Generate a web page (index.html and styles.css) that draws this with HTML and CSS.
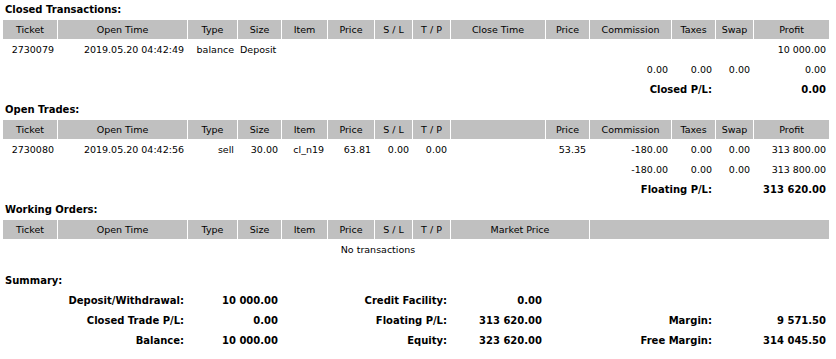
FILE: index.html
```html
<!DOCTYPE html>
<html>
<head>
<meta charset="utf-8">
<title>Statement</title>
<link rel="stylesheet" href="styles.css">
</head>
<body>
<table class="report">
  <colgroup>
    <col class="c-ticket"><col class="c-otime"><col class="c-type"><col class="c-size"><col class="c-item"><col class="c-price"><col class="c-sl"><col class="c-tp"><col class="c-ctime"><col class="c-price2"><col class="c-comm"><col class="c-tax"><col class="c-swap"><col class="c-profit">
  </colgroup>
  <tbody>
    <tr class="title"><td colspan="14">Closed Transactions:</td></tr>
    <tr class="head">
      <td>Ticket</td><td>Open Time</td><td>Type</td><td>Size</td><td>Item</td><td>Price</td><td>S / L</td><td>T / P</td><td>Close Time</td><td>Price</td><td>Commission</td><td>Taxes</td><td>Swap</td><td>Profit</td>
    </tr>
    <tr class="data">
      <td>2730079</td><td>2019.05.20 04:42:49</td><td>balance</td><td class="left">Deposit</td><td></td><td></td><td></td><td></td><td></td><td></td><td></td><td></td><td></td><td>10 000.00</td>
    </tr>
    <tr class="data">
      <td colspan="10"></td><td>0.00</td><td>0.00</td><td>0.00</td><td>0.00</td>
    </tr>
    <tr class="data total">
      <td colspan="10"></td><td colspan="2">Closed P/L:</td><td colspan="2">0.00</td>
    </tr>

    <tr class="title"><td colspan="14">Open Trades:</td></tr>
    <tr class="head">
      <td>Ticket</td><td>Open Time</td><td>Type</td><td>Size</td><td>Item</td><td>Price</td><td>S / L</td><td>T / P</td><td></td><td>Price</td><td>Commission</td><td>Taxes</td><td>Swap</td><td>Profit</td>
    </tr>
    <tr class="data">
      <td>2730080</td><td>2019.05.20 04:42:56</td><td>sell</td><td>30.00</td><td>cl_n19</td><td>63.81</td><td>0.00</td><td>0.00</td><td></td><td>53.35</td><td>-180.00</td><td>0.00</td><td>0.00</td><td>313 800.00</td>
    </tr>
    <tr class="data">
      <td colspan="10"></td><td>-180.00</td><td>0.00</td><td>0.00</td><td>313 800.00</td>
    </tr>
    <tr class="data total">
      <td colspan="10"></td><td colspan="2">Floating P/L:</td><td colspan="2">313 620.00</td>
    </tr>

    <tr class="title"><td colspan="14">Working Orders:</td></tr>
    <tr class="head">
      <td>Ticket</td><td>Open Time</td><td>Type</td><td>Size</td><td>Item</td><td>Price</td><td>S / L</td><td>T / P</td><td colspan="2">Market Price</td><td colspan="4"></td>
    </tr>
    <tr class="data">
      <td colspan="13" class="center">No transactions</td><td></td>
    </tr>
    <tr class="spacer"><td colspan="14"></td></tr>

    <tr class="title"><td colspan="14">Summary:</td></tr>
    <tr class="data total">
      <td colspan="2">Deposit/Withdrawal:</td><td colspan="2">10 000.00</td><td colspan="4">Credit Facility:</td><td>0.00</td><td colspan="3"></td><td colspan="2"></td>
    </tr>
    <tr class="data total">
      <td colspan="2">Closed Trade P/L:</td><td colspan="2">0.00</td><td colspan="4">Floating P/L:</td><td>313 620.00</td><td colspan="3">Margin:</td><td colspan="2">9 571.50</td>
    </tr>
    <tr class="data total">
      <td colspan="2">Balance:</td><td colspan="2">10 000.00</td><td colspan="4">Equity:</td><td>323 620.00</td><td colspan="3">Free Margin:</td><td colspan="2">314 045.50</td>
    </tr>
  </tbody>
</table>
</body>
</html>
```

FILE: styles.css
```css
html, body {
  margin: 0;
  padding: 0;
  background: #ffffff;
}

.report {
  margin: -1px 0 0 2px;
  width: 828px;
  table-layout: fixed;
  border-collapse: separate;
  border-spacing: 1px;
  font-family: "DejaVu Sans", Verdana, sans-serif;
  font-size: 9.5px;
  line-height: 13px;
  color: #000000;
}

.c-ticket { width: 54px; }
.c-otime { width: 129px; }
.c-type { width: 49px; }
.c-size { width: 43px; }
.c-item { width: 45px; }
.c-price { width: 46px; }
.c-sl { width: 37px; }
.c-tp { width: 37px; }
.c-ctime { width: 94px; }
.c-price2 { width: 43px; }
.c-comm { width: 81px; }
.c-tax { width: 43px; }
.c-swap { width: 37px; }
.c-profit { width: 75px; }

.report td {
  padding: 3px;
  height: 13px;
  white-space: nowrap;
  overflow: hidden;
  vertical-align: middle;
}

.title td {
  text-align: left;
  font-weight: bold;
  font-size: 10px;
  padding-left: 2px;
}

.head td {
  background: #c0c0c0;
  text-align: center;
}

.data td {
  text-align: right;
}

.data td.left {
  text-align: left;
  padding-left: 2px;
  padding-right: 0;
}

.data td.center {
  text-align: center;
}

.total td {
  font-weight: bold;
  font-size: 10px;
}

.spacer td {
  height: 4px;
  padding: 3px;
  line-height: 4px;
}
```
